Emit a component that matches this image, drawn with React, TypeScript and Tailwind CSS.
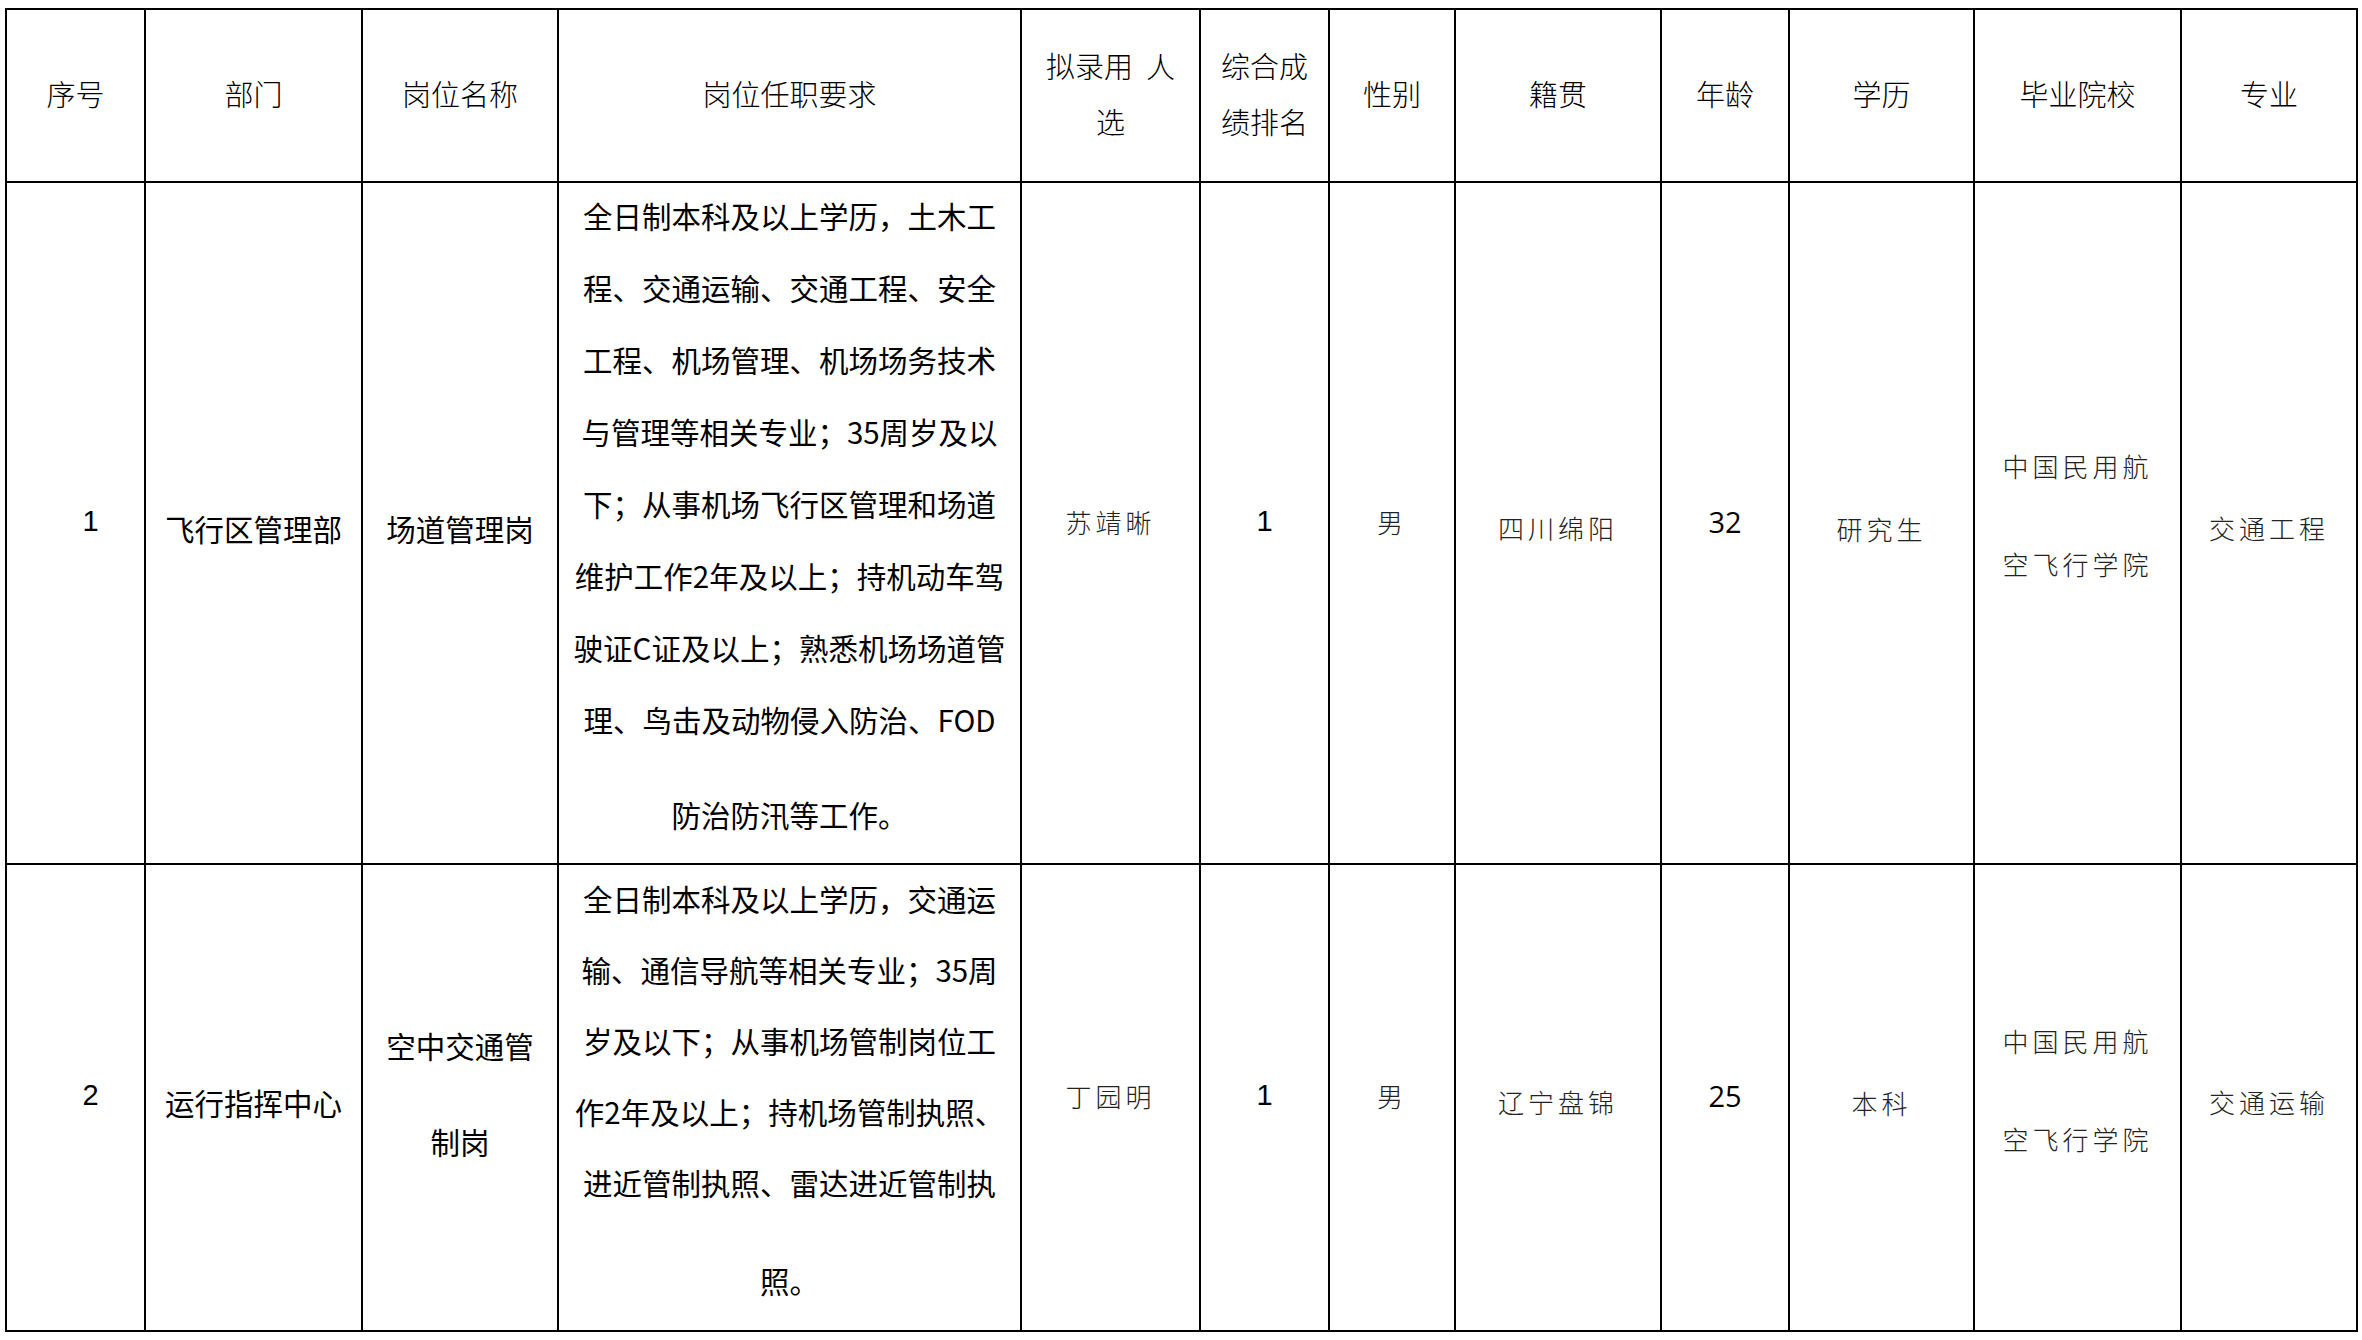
const cjk = "font-['Noto_Sans_CJK_SC',sans-serif]";

const cols = [139, 217, 196, 463, 179, 129, 126, 206, 128, 185, 207, 176];

const headers: string[][] = [
  ["序号"],
  ["部门"],
  ["岗位名称"],
  ["岗位任职要求"],
  ["拟录用  人", "选"],
  ["综合成", "绩排名"],
  ["性别"],
  ["籍贯"],
  ["年龄"],
  ["学历"],
  ["毕业院校"],
  ["专业"],
];

type Row = {
  no: string;
  dept: string;
  post: string[];
  postPad: string;
  req: string[];
  reqBox: string;
  lastGap: string;
  name: string;
  rank: string;
  sex: string;
  origin: string;
  age: string;
  edu: string;
  school: string[];
  major: string;
  height: string;
};

const rows: Row[] = [
  {
    no: "1",
    dept: "飞行区管理部",
    post: ["场道管理岗"],
    postPad: "pt-[10px]",
    req: [
      "全日制本科及以上学历，土木工",
      "程、交通运输、交通工程、安全",
      "工程、机场管理、机场场务技术",
      "与管理等相关专业；35周岁及以",
      "下；从事机场飞行区管理和场道",
      "维护工作2年及以上；持机动车驾",
      "驶证C证及以上；熟悉机场场道管",
      "理、鸟击及动物侵入防治、FOD",
      "防治防汛等工作。",
    ],
    reqBox: "leading-[72px] -mt-[4px]",
    lastGap: "mt-[23px]",
    name: "苏靖晰",
    rank: "1",
    sex: "男",
    origin: "四川绵阳",
    age: "32",
    edu: "研究生",
    school: ["中国民用航", "空飞行学院"],
    major: "交通工程",
    height: "h-[682px]",
  },
  {
    no: "2",
    dept: "运行指挥中心",
    post: ["空中交通管", "制岗"],
    postPad: "pb-[9px]",
    req: [
      "全日制本科及以上学历，交通运",
      "输、通信导航等相关专业；35周",
      "岁及以下；从事机场管制岗位工",
      "作2年及以上；持机场管制执照、",
      "进近管制执照、雷达进近管制执",
      "照。",
    ],
    reqBox: "leading-[71px] -mt-[2px]",
    lastGap: "mt-[27px]",
    name: "丁园明",
    rank: "1",
    sex: "男",
    origin: "辽宁盘锦",
    age: "25",
    edu: "本科",
    school: ["中国民用航", "空飞行学院"],
    major: "交通运输",
    height: "h-[467px]",
  },
];

const cell = "border-2 border-black text-center p-0";
const body = `text-[29.5px] text-black ${cjk}`;
const thin = `text-[26px] font-light tracking-[4px] text-[#222] ${cjk}`;

export default function App() {
  return (
    <div className="min-h-screen bg-white pl-[5px] pt-[8px]">
      <table className="w-[2353px] table-fixed border-collapse">
        <colgroup>
          {cols.map((w, i) => (
            <col key={i} style={{ width: w }} />
          ))}
        </colgroup>
        <thead>
          <tr className="h-[173px]">
            {headers.map((h, i) => (
              <th
                key={i}
                className={`${cell} align-middle pb-[6px] text-[29px] font-light leading-[56px] text-black ${cjk}`}
              >
                {h.map((line, j) => (
                  <div key={j} className="whitespace-pre">
                    {line}
                  </div>
                ))}
              </th>
            ))}
          </tr>
        </thead>
        <tbody>
          {rows.map((r) => (
            <tr key={r.no} className={r.height}>
              <td className={`${cell} align-middle pl-[30px] pb-[3px] text-[29px] text-black font-['Liberation_Sans',sans-serif]`}>
                {r.no}
              </td>
              <td className={`${cell} ${body} align-middle pt-[10px]`}>{r.dept}</td>
              <td className={`${cell} ${body} align-middle leading-[96px] ${r.postPad}`}>
                {r.post.map((l, i) => (
                  <div key={i}>{l}</div>
                ))}
              </td>
              <td className={`${cell} ${body} align-top`}>
                <div className={r.reqBox}>
                  {r.req.map((l, i) => (
                    <div
                      key={i}
                      className={"whitespace-nowrap " + (i === r.req.length - 1 ? r.lastGap : "")}
                    >
                      {l}
                    </div>
                  ))}
                </div>
              </td>
              <td className={`${cell} ${thin} align-middle pb-[4px]`}>{r.name}</td>
              <td className={`${cell} align-middle pb-[3px] text-[29px] text-black font-['Liberation_Sans',sans-serif]`}>
                {r.rank}
              </td>
              <td className={`${cell} ${thin} align-middle pb-[4px]`}>{r.sex}</td>
              <td className={`${cell} ${thin} align-middle pt-[8px]`}>{r.origin}</td>
              <td className={`${cell} align-middle pb-[3px] text-[29px] text-black font-['Open_Sans',sans-serif]`}>
                {r.age}
              </td>
              <td className={`${cell} ${thin} align-middle pt-[10px]`}>{r.edu}</td>
              <td className={`${cell} ${thin} align-middle pb-[16px] leading-[98px]`}>
                {r.school.map((l, i) => (
                  <div key={i}>{l}</div>
                ))}
              </td>
              <td className={`${cell} ${thin} align-middle pt-[8px]`}>{r.major}</td>
            </tr>
          ))}
        </tbody>
      </table>
    </div>
  );
}
